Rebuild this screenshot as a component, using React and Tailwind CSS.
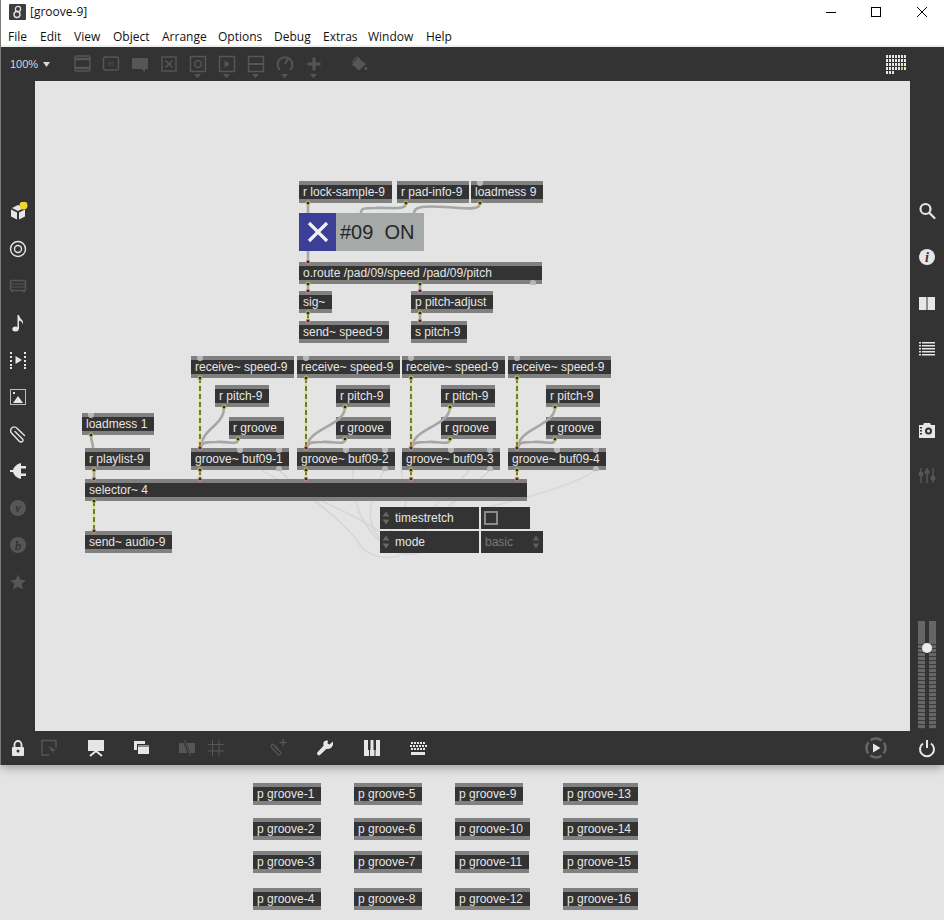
import React from 'react';

const FONT = { fontFamily: '"Liberation Sans", Arial, sans-serif' };

const nodes = [
  { x: 299, y: 181, w: 93, t: 'r lock-sample-9' },
  { x: 397, y: 181, w: 72, t: 'r pad-info-9' },
  { x: 471, y: 181, w: 72, t: 'loadmess 9', dots: [[9, 0]] },
  { x: 299, y: 262, w: 243, t: 'o.route /pad/09/speed /pad/09/pitch', dots: [[234, 22]] },
  { x: 299, y: 291, w: 33, t: 'sig~' },
  { x: 411, y: 291, w: 82, t: 'p pitch-adjust' },
  { x: 299, y: 321, w: 90, t: 'send~ speed-9' },
  { x: 411, y: 321, w: 56, t: 's pitch-9' },
  { x: 191, y: 356, w: 103, t: 'receive~ speed-9', dots: [[9, 0]] },
  { x: 297, y: 356, w: 103, t: 'receive~ speed-9', dots: [[9, 0]] },
  { x: 402, y: 356, w: 103, t: 'receive~ speed-9', dots: [[9, 0]] },
  { x: 508, y: 356, w: 103, t: 'receive~ speed-9', dots: [[9, 0]] },
  { x: 215, y: 385, w: 54, t: 'r pitch-9' },
  { x: 336, y: 385, w: 54, t: 'r pitch-9' },
  { x: 441, y: 385, w: 54, t: 'r pitch-9' },
  { x: 546, y: 385, w: 54, t: 'r pitch-9' },
  { x: 229, y: 417, w: 55, t: 'r groove' },
  { x: 336, y: 417, w: 55, t: 'r groove' },
  { x: 441, y: 417, w: 55, t: 'r groove' },
  { x: 546, y: 417, w: 55, t: 'r groove' },
  { x: 82, y: 413, w: 72, t: 'loadmess 1', dots: [[9, 0]] },
  { x: 85, y: 448, w: 65, t: 'r playlist-9' },
  { x: 191, y: 448, w: 98, t: 'groove~ buf09-1', dots: [[49, 0], [88, 0], [88, 22]] },
  { x: 297, y: 448, w: 98, t: 'groove~ buf09-2', dots: [[49, 0], [88, 0], [88, 22]] },
  { x: 402, y: 448, w: 98, t: 'groove~ buf09-3', dots: [[49, 0], [88, 0], [88, 22]] },
  { x: 508, y: 448, w: 98, t: 'groove~ buf09-4', dots: [[49, 0], [88, 0], [88, 22]] },
  { x: 85, y: 479, w: 442, t: 'selector~ 4' },
  { x: 85, y: 531, w: 87, t: 'send~ audio-9' },
];

const lowerNodes = [
  { x: 253, y: 783, w: 68, t: 'p groove-1' },
  { x: 253, y: 818, w: 68, t: 'p groove-2' },
  { x: 253, y: 851, w: 68, t: 'p groove-3' },
  { x: 253, y: 888, w: 68, t: 'p groove-4' },
  { x: 354, y: 783, w: 68, t: 'p groove-5' },
  { x: 354, y: 818, w: 68, t: 'p groove-6' },
  { x: 354, y: 851, w: 68, t: 'p groove-7' },
  { x: 354, y: 888, w: 68, t: 'p groove-8' },
  { x: 455, y: 783, w: 68, t: 'p groove-9' },
  { x: 455, y: 818, w: 75, t: 'p groove-10' },
  { x: 455, y: 851, w: 74, t: 'p groove-11' },
  { x: 455, y: 888, w: 75, t: 'p groove-12' },
  { x: 563, y: 783, w: 75, t: 'p groove-13' },
  { x: 563, y: 818, w: 75, t: 'p groove-14' },
  { x: 563, y: 851, w: 75, t: 'p groove-15' },
  { x: 563, y: 888, w: 75, t: 'p groove-16' },
];

const menu = [
  { t: 'File', w: 32 }, { t: 'Edit', w: 34 }, { t: 'View', w: 39 }, { t: 'Object', w: 49 },
  { t: 'Arrange', w: 56 }, { t: 'Options', w: 56 }, { t: 'Debug', w: 49 }, { t: 'Extras', w: 45 },
  { t: 'Window', w: 58 }, { t: 'Help', w: 40 },
];

const plainWires = [
  'M308 203V213', 'M308 251V262',
  'M406 203C406 211 390 207 375 208C364 208 361 208 361 213',
  'M480 203C480 211 465 208 445 207C425 206 414 206 414 213',
  'M308 284V291', 'M420 284V291', 'M420 313V321',
  'M91 435C91 442 93 442 93 448', 'M94 470V479',
];

const signalWires = [
  'M308 313V321',
  'M200 378V448', 'M306 378V448', 'M411 378V448', 'M517 378V448',
  'M200 470V479', 'M306 470V479', 'M411 470V479', 'M517 470V479',
  'M94 501V531',
];

// r pitch + r groove pairs going into each groove~
const pitchWires = [
  [200, 224, 238], [306, 345, 345], [411, 450, 450], [517, 555, 555],
].flatMap(([x, p, g]) => [
  `M${p} 407C${p} 426 ${x + 2} 428 ${x + 1} 447`,
  `M${g} 439C${g} 446 ${x + 30} 441 ${x + 16} 442C${x + 8} 442 ${x + 2} 442 ${x + 1} 447`,
]);

const faintWires = [
  'M262 470C290 490 350 510 380 532',
  'M279 470C310 500 345 520 360 545C368 556 385 560 400 556',
  'M346 448C360 470 345 500 370 530C385 552 410 560 430 548',
  'M384 470C372 500 360 520 385 545C400 560 420 555 440 545',
  'M420 448C395 442 400 470 405 490C410 510 395 530 380 540',
  'M470 470C450 490 430 510 418 525',
  'M490 470C470 490 440 510 420 535',
  'M596 470C560 495 480 505 450 520',
];

const outlets = [
  [308, 203], [406, 203], [480, 203], [308, 284], [420, 284], [308, 313], [420, 313],
  [200, 378], [306, 378], [411, 378], [517, 378],
  [224, 407], [345, 407], [450, 407], [555, 407], [238, 439], [345, 439], [450, 439], [555, 439],
  [91, 435], [94, 470], [200, 470], [306, 470], [411, 470], [517, 470], [94, 501],
];

const inlets = [
  [308, 262], [308, 291], [420, 291], [308, 321], [420, 321],
  [200, 448], [306, 448], [411, 448], [517, 448],
  [94, 479], [200, 479], [306, 479], [411, 479], [517, 479], [94, 531],
];

const Box = ({ n, ox, oy }) => (
  <div
    className="absolute h-[22px] bg-[#333333] border-y-4 border-[#808080] box-border pl-[4px] text-[12px] leading-[14px] text-[#e6e6e6] whitespace-nowrap overflow-visible"
    style={{ left: n.x - ox, top: n.y - oy, width: n.w }}
  >
    {n.t}
    {n.dots?.map(([dx, dy], i) => (
      <span
        key={i}
        className="absolute w-[6px] h-[5px] bg-[#b8b8b8]"
        style={{
          left: dx - 3,
          top: dy === 0 ? -4 : 14,
          borderRadius: dy === 0 ? '0 0 3px 3px' : '3px 3px 0 0',
        }}
      />
    ))}
  </div>
);

const UpDown = ({ color = '#666' }) => (
  <svg width="8" height="14" viewBox="0 0 8 14" fill={color}>
    <path d="M4 0.5L7.5 5.5H0.5Z" />
    <path d="M4 13.5L7.5 8.5H0.5Z" />
  </svg>
);

const Ico = ({ children, size = 20, view = '0 0 20 20' }) => (
  <svg width={size} height={size} viewBox={view} className="shrink-0">{children}</svg>
);

const DIM = '#565656';
const LT = '#e6e6e6';

const toolIcons = [
  { drop: false, d: <g fill="none" stroke={DIM} strokeWidth="1.5"><rect x="2" y="1" width="15" height="15" rx="1" /><path d="M2 4H17M2 13H17" strokeWidth="2.5" /></g> },
  { drop: false, d: <g><rect x="1.5" y="2" width="15" height="13" rx="2" fill="none" stroke={DIM} strokeWidth="1.5" /><text x="6" y="11" fontSize="7" fontStyle="italic" fill={DIM} style={FONT}>m</text></g> },
  { drop: false, d: <path d="M1 3H17V14H14V17L10.5 14H1Z" fill={DIM} /> },
  { drop: false, d: <g fill="none" stroke={DIM} strokeWidth="1.5"><rect x="2" y="2" width="14" height="14" /><path d="M5.5 5.5L12.5 12.5M12.5 5.5L5.5 12.5" /></g> },
  { drop: true, d: <g fill="none" stroke={DIM} strokeWidth="1.5"><rect x="1.5" y="1.5" width="15" height="15" /><circle cx="9" cy="9" r="3.5" /></g> },
  { drop: true, d: <g fill="none" stroke={DIM} strokeWidth="1.5"><rect x="1.5" y="1.5" width="15" height="15" /><path d="M6.5 5.5L12 9L6.5 12.5Z" fill={DIM} stroke="none" /></g> },
  { drop: true, d: <g fill="none" stroke={DIM} strokeWidth="1.5"><rect x="1.5" y="1.5" width="15" height="15" /><path d="M1.5 9H16.5" strokeWidth="2" /></g> },
  { drop: true, d: <g fill="none" stroke={DIM} strokeWidth="2"><path d="M4 15A7.4 7.4 0 1 1 14 15" /><path d="M9 9L12 4" /></g> },
  { drop: true, d: <path d="M7.5 2.5H10.5V7.5H15.5V10.5H10.5V15.5H7.5V10.5H2.5V7.5H7.5Z" fill={DIM} /> },
];

const leftIcons = [
  <g key="cube"><path d="M10 3L16 6L10 9L4 6Z" fill={LT} /><path d="M3 7.5L9 10.5V17.500L3 14.500Z" fill={LT} /><path d="M11 10.5L17 7.5V14.500L11 17.500Z" fill={LT} /><circle cx="15.5" cy="3.5" r="4" fill="#f5d327" /></g>,
  <g fill="none" stroke={LT} strokeWidth="1.4"><circle cx="10" cy="10" r="7.5" /><circle cx="10" cy="10" r="3.5" /></g>,
  <g fill="none" stroke={DIM} strokeWidth="1.5"><rect x="2.5" y="4.5" width="15" height="10" rx="1" /><path d="M2.5 8H17.5M2.5 11H17.5" strokeWidth="1" /><path d="M4 15V16.5M16 15V16.5" /></g>,
  <g fill={LT}><ellipse cx="7.5" cy="16" rx="3.2" ry="2.5" /><path d="M9.5 2H11C11.5 6 16 6.5 15 11.5C14.6 9 12.5 8 11 7.5V16H9.5Z" /></g>,
  <g fill={LT}><path d="M7.5 6L14 10L7.5 14Z" /><path d="M2 2h2v2H2zM2 6h2v2H2zM2 10h2v2H2zM2 14h2v2H2zM2 17h2v2H2zM16 2h2v2h-2zM16 6h2v2h-2zM16 10h2v2h-2zM16 14h2v2h-2zM16 17h2v2h-2z" /></g>,
  <g><rect x="2.5" y="2.5" width="15" height="15" fill="none" stroke="#bdbdbd" strokeWidth="1" /><rect x="5" y="5" width="2" height="2" fill={LT} /><path d="M5 16L10 9L15 16Z" fill={LT} /></g>,
  <path d="M7 7.500L14.500 15C15.500 16 15 17.500 14 17.800C13 18.200 12 18 11 17L3.500 9C2 7.500 2.500 5 4 3.800C5.500 2.500 7.500 2.800 9 4.200L16.500 11.500" fill="none" stroke={LT} strokeWidth="1.400" strokeLinecap="round" />,
  <g fill={LT}><path d="M2 10H6" stroke={LT} strokeWidth="2" /><path d="M5 10C5 6 9 3 13 2V18C9 17 5 14 5 10Z" /><rect x="13" y="5" width="5" height="2.500" /><rect x="13" y="12.500" width="5" height="2.500" /></g>,
  <g><circle cx="10" cy="10" r="8" fill={DIM} /><text x="10" y="14" textAnchor="middle" fontSize="12" fontStyle="italic" fontWeight="bold" fill="#333" style={{ fontFamily: '"Liberation Serif", serif' }}>v</text></g>,
  <g><circle cx="10" cy="10" r="8" fill={DIM} /><text x="10" y="14.5" textAnchor="middle" fontSize="13" fontStyle="italic" fontWeight="bold" fill="#333" style={{ fontFamily: '"Liberation Serif", serif' }}>b</text></g>,
  <path d="M10 2.5L12.3 7.8L18 8.3L13.7 12L15 17.6L10 14.7L5 17.6L6.3 12L2 8.3L7.7 7.8Z" fill={DIM} />,
];

const rightIcons = [
  <g fill="none" stroke={LT} strokeWidth="2.2"><circle cx="8.5" cy="8" r="5" /><path d="M12.5 12L17.5 17" strokeLinecap="round" /></g>,
  <g><circle cx="10" cy="10" r="8" fill={LT} /><text x="10" y="15" textAnchor="middle" fontSize="14" fontStyle="italic" fontWeight="bold" fill="#333" style={{ fontFamily: '"Liberation Serif", serif' }}>i</text></g>,
  <g><rect x="2" y="4" width="7" height="13" fill={LT} /><rect x="9" y="4" width="2" height="13" fill="#8c8c8c" /><rect x="11" y="4" width="7" height="13" fill={LT} /></g>,
  <g fill={LT}><path d="M2 3h2v1.5H2zM5 3h13v1.5H5zM2 6h2v1.5H2zM5 6h13v1.5H5zM2 9h2v1.5H2zM5 9h13v1.5H5zM2 12h2v1.5H2zM5 12h13v1.5H5zM2 15h2v1.5H2zM5 15h13v1.5H5z" /></g>,
];

const bottomIcons = [
  { ml: 'ml-[7px]', d: <g fill={LT}><path d="M6.5 9V6.5A3.5 3.5 0 0 1 13.5 6.5V9" fill="none" stroke={LT} strokeWidth="1.8" /><rect x="4" y="9" width="12" height="9" rx="1" /><circle cx="10" cy="13" r="1.5" fill="#333" /></g> },
  { ml: 'ml-[11px]', d: <g fill="none" stroke={DIM} strokeWidth="1.5"><path d="M17 10V2.5H3V17H10" /><path d="M9 8L17 12L13.5 13.5L16 18" fill={DIM} stroke="none" /></g> },
  { ml: 'ml-[27px]', d: <g><rect x="2" y="2" width="16" height="11" fill={LT} /><path d="M10 13L4 18M10 13L16 18" stroke={LT} strokeWidth="2" /></g> },
  { ml: 'ml-[25px]', d: <g fill={LT}><path d="M3 3H14V6H6V12H3Z" /><rect x="7" y="7" width="11" height="9" /><path d="M7 8H18" stroke="#8f8f8f" strokeWidth="2" /></g> },
  { ml: 'ml-[26px]', d: <g><rect x="2" y="5" width="16" height="10" fill={DIM} /><path d="M7 2L13 18" stroke="#333" strokeWidth="3" /><path d="M7.5 2L13.5 18" stroke={DIM} strokeWidth="1" /></g> },
  { ml: 'ml-[9px]', d: <path d="M2 6.5H18M2 13H18M6.5 2V18M13 2V18" stroke={DIM} strokeWidth="1" fill="none" /> },
  { ml: 'ml-[42px]', d: <g fill="none" stroke={DIM} strokeWidth="1.2"><path d="M11 9L7 5C5.5 3.5 3 5.500 4.500 7.500L10.500 14C12 16 15 14 13.500 12L8 7" transform="translate(-1 2)" /><path d="M15 1V8M11.500 4.500H18.500" strokeWidth="1.400" /></g> },
  { ml: 'ml-[27px]', d: <path d="M18 3.500L14.500 6.500L12.500 5.500L13 2.800C11 1.800 8.500 3 8.300 5.500C8.200 6.300 8.400 7 8.700 7.500L2.300 14.500C1.200 16 3.500 18.300 5 17L11.600 10.700C14.500 11.600 17.800 9.500 18 6Z" fill={LT} /> },
  { ml: 'ml-[27px]', d: <g><rect x="2" y="2" width="16" height="16" fill={LT} /><path d="M6 2h2.500v10H6zM11.500 2H14v10h-2.500z" fill="#333" /><path d="M7 12h1v6H7zM12.500 12h1v6h-1z" fill="#333" /></g> },
  { ml: 'ml-[26px]', d: <g fill={LT}><path d="M3 4h2v2H3zM6 4h2v2H6zM9 4h2v2H9zM12 4h2v2h-2zM15 4h2v2h-2zM2 7h2v2H2zM5 7h2v2H5zM8 7h2v2H8zM11 7h2v2h-2zM14 7h2v2h-2zM17 7h2v2h-2zM3 10h2v2H3zM6 10h2v2H6zM9 10h2v2H9zM12 10h2v2h-2zM15 10h2v2h-2z" /><rect x="3" y="14" width="14" height="3" /></g> },
];

const App = () => {
  return (
    <div className="relative w-[944px] h-[920px] overflow-hidden bg-[#e4e4e4] flex flex-col" style={FONT}>
      {/* patcher window */}
      <div className="relative z-10 w-[944px] h-[765px] shrink-0 flex flex-col bg-white border-l border-[#7a7a7a] box-border shadow-[0_2px_10px_rgba(0,0,0,0.35)]">
        {/* title bar */}
        <div className="h-[24px] flex items-center shrink-0 pl-[8px]">
          <svg width="17" height="16" viewBox="0 0 17 16">
            <rect width="17" height="16" rx="1" fill="#3d3d3d" />
            <circle cx="9" cy="5" r="2.6" fill="none" stroke="#e6e6e6" strokeWidth="1.2" />
            <circle cx="8" cy="10.5" r="3" fill="none" stroke="#dfe8e6" strokeWidth="1.4" />
          </svg>
          <span className="ml-[4px] text-[12px] text-[#111] leading-none" style={{ fontFamily: '"Open Sans", sans-serif' }}>[groove-9]</span>
          <div className="ml-auto flex items-center">
            <div className="w-[10px] h-[1px] bg-black mr-[35px]" />
            <div className="w-[10px] h-[10px] border border-black mr-[35px]" />
            <svg width="12" height="12" viewBox="0 0 12 12" className="mr-[16px]"><path d="M1 1L11 11M11 1L1 11" stroke="#000" strokeWidth="1" /></svg>
          </div>
        </div>
        {/* menu bar */}
        <div className="h-[21px] flex items-center shrink-0 pl-[7px] pt-[5px] text-[12px] text-[#111] border-b-2 border-[#f0f0f0] box-content" style={{ fontFamily: '"Open Sans", sans-serif', height: 16 }}>
          {menu.map((m) => (
            <span key={m.t} className="shrink-0" style={{ width: m.w }}>{m.t}</span>
          ))}
        </div>
        {/* toolbar */}
        <div className="h-[34px] shrink-0 bg-[#333333] flex items-center pl-[9px]">
          <span className="text-[11px] text-[#d8d8d8] w-[33px]">100%</span>
          <svg width="7" height="5" viewBox="0 0 7 5" className="shrink-0"><path d="M0 0H7L3.500 5Z" fill="#d8d8d8" /></svg>
          <div className="flex ml-[17px]">
            {toolIcons.map((ic, i) => (
              <div key={i} className="relative w-[29px] flex justify-center">
                <Ico size={18} view="0 0 18 18">{ic.d}</Ico>
                {ic.drop && (
                  <svg width="7" height="4" viewBox="0 0 7 4" className="absolute top-[19px] left-[11px]"><path d="M0 0H7L3.500 4Z" fill={DIM} /></svg>
                )}
              </div>
            ))}
          </div>
          <div className="ml-[22px]">
            <Ico size={18} view="0 0 18 18">
              <path d="M8 3L16 9L9 15.500L2 9.500Z" fill={DIM} />
              <path d="M3 8C4 3 7 1 10 4" stroke={DIM} fill="none" strokeWidth="1.200" />
              <circle cx="16" cy="13.500" r="1.500" fill={DIM} />
            </Ico>
          </div>
          <svg width="21" height="19" viewBox="0 0 21 19" className="ml-auto mr-[37px]">
            {[0, 1, 2, 3, 4].map((r) =>
              [0, 1, 2, 3, 4, 5, 6].filter((c) => r < 4 || c < 3).map((c) => (
                <rect key={`${r}-${c}`} x={c * 3} y={r * 4} width="2" height="3" fill={r === 3 && c === 5 ? '#e8c62a' : '#e6e6e6'} />
              ))
            )}
          </svg>
        </div>
        {/* middle */}
        <div className="flex-1 flex min-h-0">
          <div className="w-[34px] shrink-0 bg-[#333333] flex flex-col items-center pt-[112px] pr-[1px]">
            {leftIcons.map((d, i) => (
              <div key={i} className="h-[37px] flex items-center justify-center shrink-0"><Ico>{d}</Ico></div>
            ))}
          </div>
          <div className="relative flex-1 bg-[#e4e4e4]">
            <svg className="absolute inset-0 w-full h-full" viewBox="35 81 875 650">
              {faintWires.map((d, i) => (
                <path key={i} d={d} fill="none" stroke="#d6d6d6" strokeWidth="1.500" />
              ))}
            </svg>
            {nodes.map((n, i) => <Box key={i} n={n} ox={35} oy={81} />)}

            {/* toggle and its label */}
            <div className="absolute left-[264px] top-[132px] w-[125px] h-[38px] flex bg-[#a5aaa8]">
              <div className="w-[37px] h-[38px] bg-[#3b3f98] flex items-center justify-center">
                <svg width="24" height="24" viewBox="0 0 24 24"><path d="M3 3L21 21M21 3L3 21" stroke="#f2f2f2" strokeWidth="3.200" /></svg>
              </div>
              <span className="ml-[4px] text-[20px] leading-[38px] text-[#262626] whitespace-pre">#09  ON</span>
            </div>

            {/* attribute rows */}
            <div className="absolute left-[345px] top-[426px] w-[99px] h-[22px] bg-[#333333] flex items-center pl-[2px] text-[12px] text-[#e6e6e6]">
              <UpDown /><span className="ml-[5px]">timestretch</span>
            </div>
            <div className="absolute left-[446px] top-[426px] w-[49px] h-[22px] bg-[#333333] flex items-center pl-[3px]">
              <div className="w-[14px] h-[14px] border-2 border-[#8a8a8a]" />
            </div>
            <div className="absolute left-[345px] top-[450px] w-[99px] h-[22px] bg-[#333333] flex items-center pl-[2px] text-[12px] text-[#e6e6e6]">
              <UpDown /><span className="ml-[5px]">mode</span>
            </div>
            <div className="absolute left-[446px] top-[450px] w-[62px] h-[22px] bg-[#333333] flex items-center justify-between pl-[4px] pr-[3px] text-[12px] text-[#777777]">
              <span>basic</span><UpDown color="#5c5c5c" />
            </div>

            {/* patch cords */}
            <svg className="absolute inset-0 w-full h-full pointer-events-none" viewBox="35 81 875 650">
              {[...plainWires, ...pitchWires].map((d, i) => (
                <path key={i} d={d} fill="none" stroke="#a6a6a6" strokeWidth="2.600" />
              ))}
              {signalWires.map((d, i) => (
                <g key={i}>
                  <path d={d} fill="none" stroke="#d9e67a" strokeWidth="2.800" />
                  <path d={d} fill="none" stroke="#2e2e2e" strokeWidth="1.200" strokeDasharray="5 3" />
                </g>
              ))}
              {outlets.map(([x, y], i) => (
                <circle key={i} cx={x} cy={y} r="2" fill="#2e2e2e" stroke="#c9cf5a" strokeWidth="1" />
              ))}
              {inlets.map(([x, y], i) => (
                <circle key={i} cx={x} cy={y} r="2" fill="#2e2e2e" stroke="#e39a8c" strokeWidth="1" />
              ))}
            </svg>
          </div>
          <div className="w-[34px] shrink-0 bg-[#333333] flex flex-col items-center pt-[107px] relative">
            {rightIcons.map((d, i) => (
              <div key={i} className="h-[46px] flex items-center justify-center shrink-0"><Ico>{d}</Ico></div>
            ))}
            <div className="mt-[35px] h-[46px] flex items-center justify-center shrink-0">
              <Ico>
                <path d="M2 5H6L7 3H13L14 5H18V18H2Z" fill={LT} />
                <circle cx="11.500" cy="11" r="3.500" fill="#333" /><circle cx="11.500" cy="11" r="1.500" fill={LT} />
                <path d="M3 7h2v1.500H3zM3 10h2v1.500H3zM3 13h2v1.500H3z" fill="#333" />
              </Ico>
            </div>
            <div className="h-[44px] flex items-center justify-center shrink-0">
              <Ico>
                <g stroke={DIM} strokeWidth="1.500"><path d="M4 3V18M10 3V18M16 3V18" /></g>
                <g fill={DIM}><circle cx="4" cy="9" r="2.500" /><circle cx="10" cy="7" r="2.500" /><circle cx="16" cy="13" r="2.500" /></g>
              </Ico>
            </div>
            {/* volume meter */}
            <div className="mt-auto mb-[2px] flex gap-[4px] relative">
              {[0, 1].map((k) => (
                <div key={k} className="w-[7px] h-[108px] flex flex-col">
                  <div className="h-[23px] bg-[#666666] shrink-0" />
                  <div className="flex-1 bg-[repeating-linear-gradient(to_bottom,#3c3c3c_0,#3c3c3c_1px,#666666_1px,#666666_4px)]" />
                </div>
              ))}
              <div className="absolute left-[4px] top-[22px] w-[10px] h-[10px] rounded-full bg-[#ececec]" />
            </div>
          </div>
        </div>
        {/* bottom bar */}
        <div className="h-[34px] shrink-0 bg-[#333333] flex items-center">
          {bottomIcons.map((ic, i) => (
            <div key={i} className={ic.ml}><Ico>{ic.d}</Ico></div>
          ))}
          <div className="ml-auto">
            <Ico size={24} view="0 0 24 24">
              <circle cx="12" cy="12" r="9.500" fill="none" stroke="#666" strokeWidth="2.500" strokeDasharray="12 2.900" strokeDashoffset="6" />
              <path d="M9 7.500L16.500 12L9 16.500Z" fill={LT} />
            </Ico>
          </div>
          <div className="ml-[29px] mr-[7px]">
            <Ico>
              <path d="M6 5.500A7 7 0 1 0 14 5.500" fill="none" stroke={LT} strokeWidth="2" />
              <path d="M10 2V10" stroke={LT} strokeWidth="2" />
            </Ico>
          </div>
        </div>
      </div>

      {/* lower patcher area */}
      <div className="relative flex-1">
        {lowerNodes.map((n, i) => <Box key={i} n={n} ox={0} oy={765} />)}
      </div>
    </div>
  );
};

export default App;
